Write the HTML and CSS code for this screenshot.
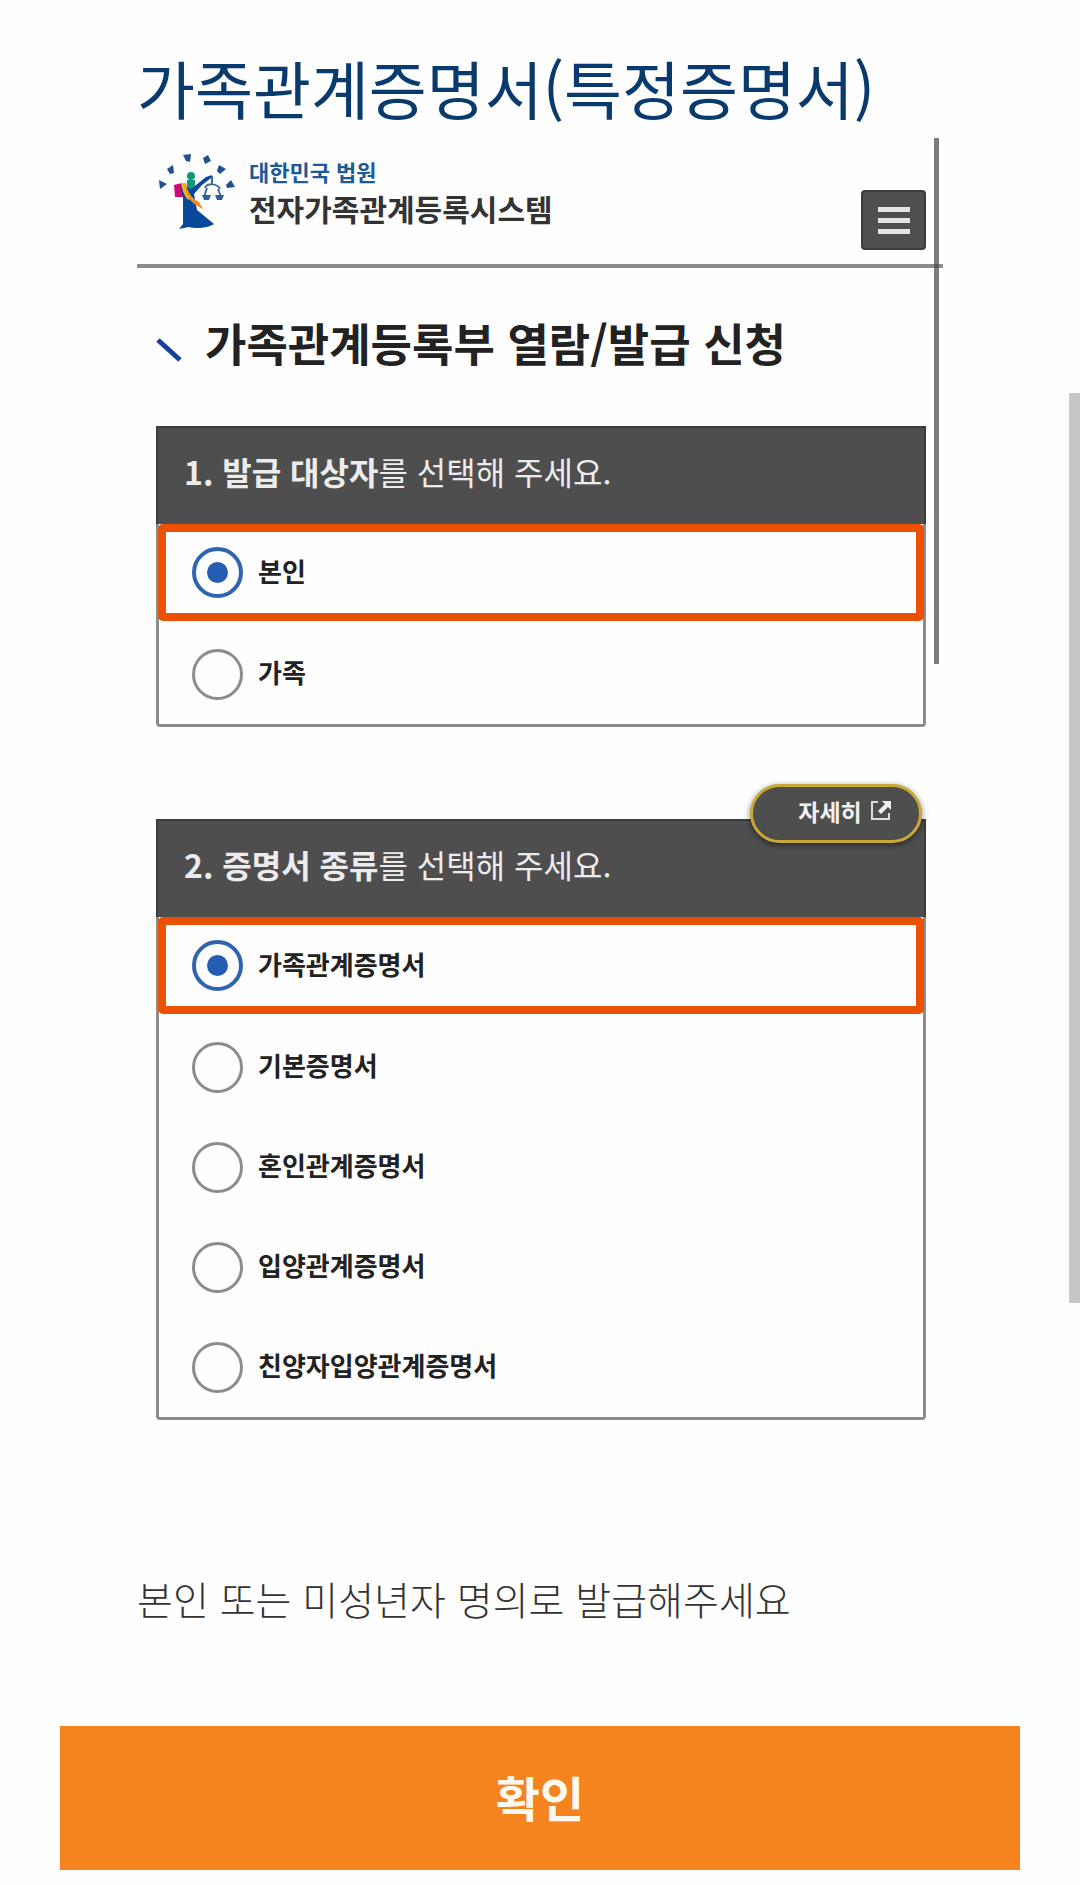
FILE: index.html
```html
<!DOCTYPE html>
<html lang="ko">
<head>
    <meta charset="UTF-8">
    <meta name="viewport" content="width=device-width, initial-scale=1.0">
    <title>가족관계증명서(특정증명서)</title>
    <link rel="stylesheet" href="styles.css">
</head>
<body>
    <main class="page">
        <div class="content">
            <h1 class="page-title">가족관계증명서(특정증명서)</h1>

            <section class="screen">
                <header class="site-header">
                    <a class="brand" href="#">
                        <svg class="brand-logo" viewBox="0 0 80 80" aria-hidden="true">
                            <g fill="#1d5291">
                                <path d="M2 28l8 4-7 5z"/>
                                <path d="M10 17l6-4 1 8-4 1z"/>
                                <path d="M26 3l8-1-1 8-4-1z"/>
                                <path d="M46 6l5-3 3 6-6 3z"/>
                                <path d="M62 13l7 4-6 5-3-3z"/>
                                <path d="M69 33l5-5 4 7-8 1z"/>
                            </g>
                            <circle cx="34" cy="24" r="4" fill="#0c9a78"/>
                            <path d="M30 28h8v12l-8-4z" fill="#13987c"/>
                            <path d="M17 33l8-2 3 14H18z" fill="#cf0879"/>
                            <path d="M34 37l15-12 6-2-1 3-9 7-8 9 3 16 17 14c-6 4-18 5-25 3l-10 2 4-5V45l-3-12z" fill="#08489a"/>
                            <path d="M25 31c3 14 9 20 21 26l-4-7C33 45 30 38 29 31z" fill="#f28c20"/>
                            <path d="M24 31c1 7 3 12 7 17l2-2c-4-4-5-9-5-15z" fill="#f3b51d"/>
                            <g fill="none" stroke="#3c6ca5" stroke-width="2">
                                <path d="M55 24v8M48 36c2-5 12-5 15 1M50 36l-3 9M61 37l3 8"/>
                            </g>
                            <path d="M45 43h9l-2 5h-5zM58 43h9l-2 5h-5z" fill="#2d6099"/>
                        </svg>
                        <span class="brand-text">
                            <span class="brand-court">대한민국 법원</span>
                            <span class="brand-name">전자가족관계등록시스템</span>
                        </span>
                    </a>
                    <button class="menu-button" type="button" aria-label="메뉴">
                        <span class="menu-bar"></span>
                        <span class="menu-bar"></span>
                        <span class="menu-bar"></span>
                    </button>
                </header>

                <h2 class="section-title">
                    <svg class="section-mark" viewBox="0 0 26 24" aria-hidden="true">
                        <path d="M2 2l22 20" stroke="#173f9f" stroke-width="5"/>
                    </svg>
                    가족관계등록부 열람/발급 신청
                </h2>

                <form class="cards">
                    <div class="card" role="radiogroup" aria-labelledby="target-title">
                        <h3 class="card-title" id="target-title"><strong>1. 발급 대상자</strong>를 선택해 주세요.</h3>
                        <label class="option option-selected"><input type="radio" name="target" checked><span>본인</span></label>
                        <label class="option"><input type="radio" name="target"><span>가족</span></label>
                    </div>

                    <div class="card" role="radiogroup" aria-labelledby="type-title">
                        <button class="detail-button" type="button">
                            자세히
                            <svg class="detail-icon" viewBox="0 0 22 22" aria-hidden="true">
                                <path d="M8 2H2v17h17v-6" fill="none" stroke="#ddd" stroke-width="2"/>
                                <path d="M12 1h9v9l-3-3-7 7-3-3 7-7z" fill="#eee"/>
                            </svg>
                        </button>
                        <h3 class="card-title" id="type-title"><strong>2. 증명서 종류</strong>를 선택해 주세요.</h3>
                        <label class="option option-selected"><input type="radio" name="type" checked><span>가족관계증명서</span></label>
                        <label class="option"><input type="radio" name="type"><span>기본증명서</span></label>
                        <label class="option"><input type="radio" name="type"><span>혼인관계증명서</span></label>
                        <label class="option"><input type="radio" name="type"><span>입양관계증명서</span></label>
                        <label class="option"><input type="radio" name="type"><span>친양자입양관계증명서</span></label>
                    </div>
                </form>
                <div class="screen-scroll"></div>
            </section>

            <p class="notice">본인 또는 미성년자 명의로 발급해주세요</p>
        </div>

        <button class="confirm-button" type="button">확인</button>
    </main>
    <div class="page-scroll"></div>
</body>
</html>
```
FILE: styles.css
```css
* {
    box-sizing: border-box;
}
body {
    margin: 0;
    background-color: #fefefe;
    color: #222;
    font-family: "Noto Sans CJK KR", "Noto Sans", sans-serif;
}
button {
    border: none;
    padding: 0;
    font-family: inherit;
    cursor: pointer;
}
.page {
    padding: 40px 60px 14px;
}
.content {
    padding: 0 77px;
}
.page-title {
    margin: 0 0 4px;
    color: #083a6d;
    font-size: 63px;
    font-weight: 400;
    line-height: 94px;
    white-space: nowrap;
}

/* 신청 화면 */
.screen {
    position: relative;
}
.site-header {
    display: flex;
    justify-content: space-between;
    align-items: flex-start;
    height: 130px;
    padding: 14px 17px 0 20px;
    border-bottom: 4px solid #8c8c8c;
}
.brand {
    display: flex;
    gap: 12px;
    color: #333;
    text-decoration: none;
}
.brand-logo {
    width: 80px;
    height: 80px;
}
.brand-text {
    display: flex;
    flex-direction: column;
}
.brand-court {
    color: #1d5a96;
    font-size: 22px;
    font-weight: 700;
    line-height: 38px;
}
.brand-name {
    font-size: 30px;
    font-weight: 700;
    line-height: 36px;
}
.menu-button {
    display: flex;
    flex-direction: column;
    justify-content: center;
    align-items: center;
    gap: 6px;
    width: 65px;
    height: 60px;
    margin-top: 38px;
    border: 2px solid #3c3c3c;
    border-radius: 4px;
    background-color: #4f4f4f;
}
.menu-bar {
    width: 32px;
    height: 5px;
    background-color: #e4e4e4;
}
.section-title {
    display: flex;
    align-items: center;
    gap: 23px;
    margin: 42px 19px 50px;
    font-size: 45px;
    font-weight: 700;
    line-height: 66px;
    white-space: nowrap;
}
.section-mark {
    width: 26px;
    height: 24px;
    margin-top: 14px;
}
.cards {
    display: flex;
    flex-direction: column;
    gap: 92px;
    padding: 0 17px 0 19px;
}
.card {
    position: relative;
    border: 3px solid #8c8c8c;
    border-top: none;
    border-radius: 0 0 4px 4px;
}
.card-title {
    margin: 0 -3px;
    padding: 20px 26px 30px;
    border: 2px solid #3c3c3c;
    border-bottom: none;
    background-color: #4e4e4e;
    color: #ececec;
    font-size: 32px;
    font-weight: 400;
    line-height: 46px;
}
.card-title strong {
    font-weight: 700;
}
.option {
    display: flex;
    align-items: center;
    gap: 15px;
    height: 100px;
    padding: 0 33px;
    font-size: 26px;
    font-weight: 700;
    line-height: 36px;
}
.option span {
    padding-bottom: 4px;
}
.option-selected {
    height: 97px;
    margin: 0 -1px 3px;
    padding: 0 26px;
    border: 8px solid #ec5002;
    border-radius: 5px;
}
.option input {
    display: grid;
    place-content: center;
    appearance: none;
    width: 51px;
    height: 51px;
    margin: 0;
    border: 3px solid #8c8c8c;
    border-radius: 50%;
}
.option input:checked {
    border: 4px solid #2f64b3;
}
.option input:checked::before {
    content: "";
    width: 21px;
    height: 21px;
    border-radius: 50%;
    background-color: #255db3;
}
.detail-button {
    position: absolute;
    top: -35px;
    right: 1px;
    display: flex;
    justify-content: center;
    align-items: center;
    gap: 8px;
    width: 172px;
    height: 59px;
    padding: 0 0 6px 18px;
    border: 3px solid #c9a936;
    border-radius: 30px;
    background-color: #4e4e4e;
    box-shadow: 0 2px 6px rgba(0,0,0,0.5);
    color: #f2f2f2;
    font-size: 23px;
    font-weight: 700;
}
.detail-icon {
    width: 22px;
    height: 22px;
}
.screen-scroll {
    position: absolute;
    top: 0;
    right: 4px;
    width: 5px;
    height: 526px;
    background-color: rgba(70,70,70,0.7);
}

/* 안내 문구와 확인 버튼 */
.notice {
    margin: 148px 0 98px;
    color: #333;
    font-size: 39px;
    font-weight: 300;
    line-height: 60px;
}
.confirm-button {
    display: block;
    width: 100%;
    height: 144px;
    padding-bottom: 4px;
    background-color: #f5841f;
    color: #fffaf0;
    font-size: 48px;
    font-weight: 700;
}
.page-scroll {
    position: fixed;
    top: 393px;
    right: 0;
    width: 11px;
    height: 910px;
    background-color: #c6c6c6;
}
```
